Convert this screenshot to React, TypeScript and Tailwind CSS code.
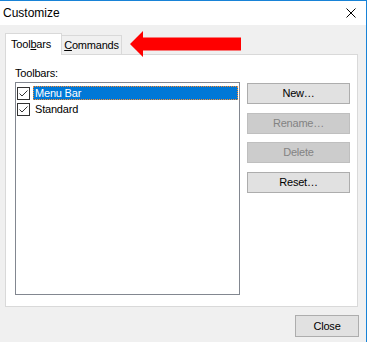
import React from "react";

function CheckBox() {
  return (
    <svg width="13" height="13" viewBox="0 0 13 13" className="shrink-0">
      <rect x="0.5" y="0.5" width="12" height="12" fill="#fff" stroke="#333333" />
      <path d="M2.5 6.5 L5 9 L10.5 3.5" fill="none" stroke="#333333" strokeWidth="1" />
    </svg>
  );
}

function Btn({ children, disabled }: { children: React.ReactNode; disabled?: boolean }) {
  return (
    <div
      className={
        disabled
          ? "h-[21px] w-full flex items-center justify-center border border-[#bfbfbf] bg-[#cccccc] text-[#838383]"
          : "h-[21px] w-full flex items-center justify-center border border-[#adadad] bg-[#e1e1e1] text-black"
      }
    >
      {children}
    </div>
  );
}

export default function App() {
  return (
    <div className="relative w-[370px] h-[342px] bg-white font-['Liberation_Sans',Arial,sans-serif] text-black overflow-hidden">
      <div className="w-[367px] h-full border-t border-r border-[#1883d7] flex flex-col">
        {/* Title bar */}
        <div className="h-[24px] bg-white flex items-center justify-between pl-[3px] pr-[10px] text-[12px]">
          <span>Customize</span>
          <svg width="10" height="10" viewBox="0 0 10 10">
            <path d="M0.5 0.5 L9.5 9.5 M9.5 0.5 L0.5 9.5" stroke="#000" strokeWidth="1" />
          </svg>
        </div>
        {/* Body */}
        <div className="flex-1 bg-[#f0f0f0] pt-[8px] pl-[5px] pr-[8px] flex flex-col text-[11px] tracking-[-0.2px]">
          {/* Tabs */}
          <div className="flex items-end h-[21px] relative z-10">
            <div className="h-[22px] w-[57px] mb-[-1px] bg-white border border-b-0 border-[#d9d9d9] flex items-center pl-[5px]">
              <span>
                Tool<span className="underline">b</span>ars
              </span>
            </div>
            <div className="h-[19px] w-[60px] border-t border-r border-[#d9d9d9] bg-[#f0f0f0] flex items-center justify-center">
              <span>
                <span className="underline">C</span>ommands
              </span>
            </div>
          </div>
          {/* Panel */}
          <div className="h-[253px] border border-[#d9d9d9] bg-white pl-[9px] pt-[12px] flex flex-col">
            <div className="leading-[13px] h-[13px]">Toolbars:</div>
            <div className="mt-[2px] flex gap-[7px]">
              <div className="w-[225px] h-[213px] border border-[#828790] bg-white pt-[2px] pl-[1px] flex flex-col">
                <div className="h-[16px] flex items-center">
                  <CheckBox />
                  <div className="ml-[3px] mr-[1px] flex-1 h-[14px] flex items-center px-[1px] bg-[#0078d7] text-white border border-dotted border-[#ff8c2a]">
                    Menu Bar
                  </div>
                </div>
                <div className="h-[16px] flex items-center">
                  <CheckBox />
                  <div className="ml-[3px] mr-[1px] flex-1 h-[14px] flex items-center px-[1px] border border-transparent">
                    Standard
                  </div>
                </div>
              </div>
              <div className="w-[103px] mt-[1px] flex flex-col gap-[8.5px]">
                <Btn>New…</Btn>
                <Btn disabled>Rename…</Btn>
                <Btn disabled>Delete</Btn>
                <Btn>Reset…</Btn>
              </div>
            </div>
          </div>
          {/* Bottom */}
          <div className="mt-[8px] flex justify-end">
            <div className="h-[22px] w-[64px] mr-[-1px] flex items-center justify-center border border-[#adadad] bg-[#e1e1e1]">
              Close
            </div>
          </div>
        </div>
      </div>
      {/* Red annotation arrow */}
      <svg
        className="absolute left-[129px] top-[30px]"
        width="114"
        height="28"
        viewBox="0 0 114 28"
      >
        <polygon
          points="1,14 14,1 14,7.5 112,7.5 112,20.5 14,20.5 14,27"
          fill="#ff0000"
        />
      </svg>
    </div>
  );
}
